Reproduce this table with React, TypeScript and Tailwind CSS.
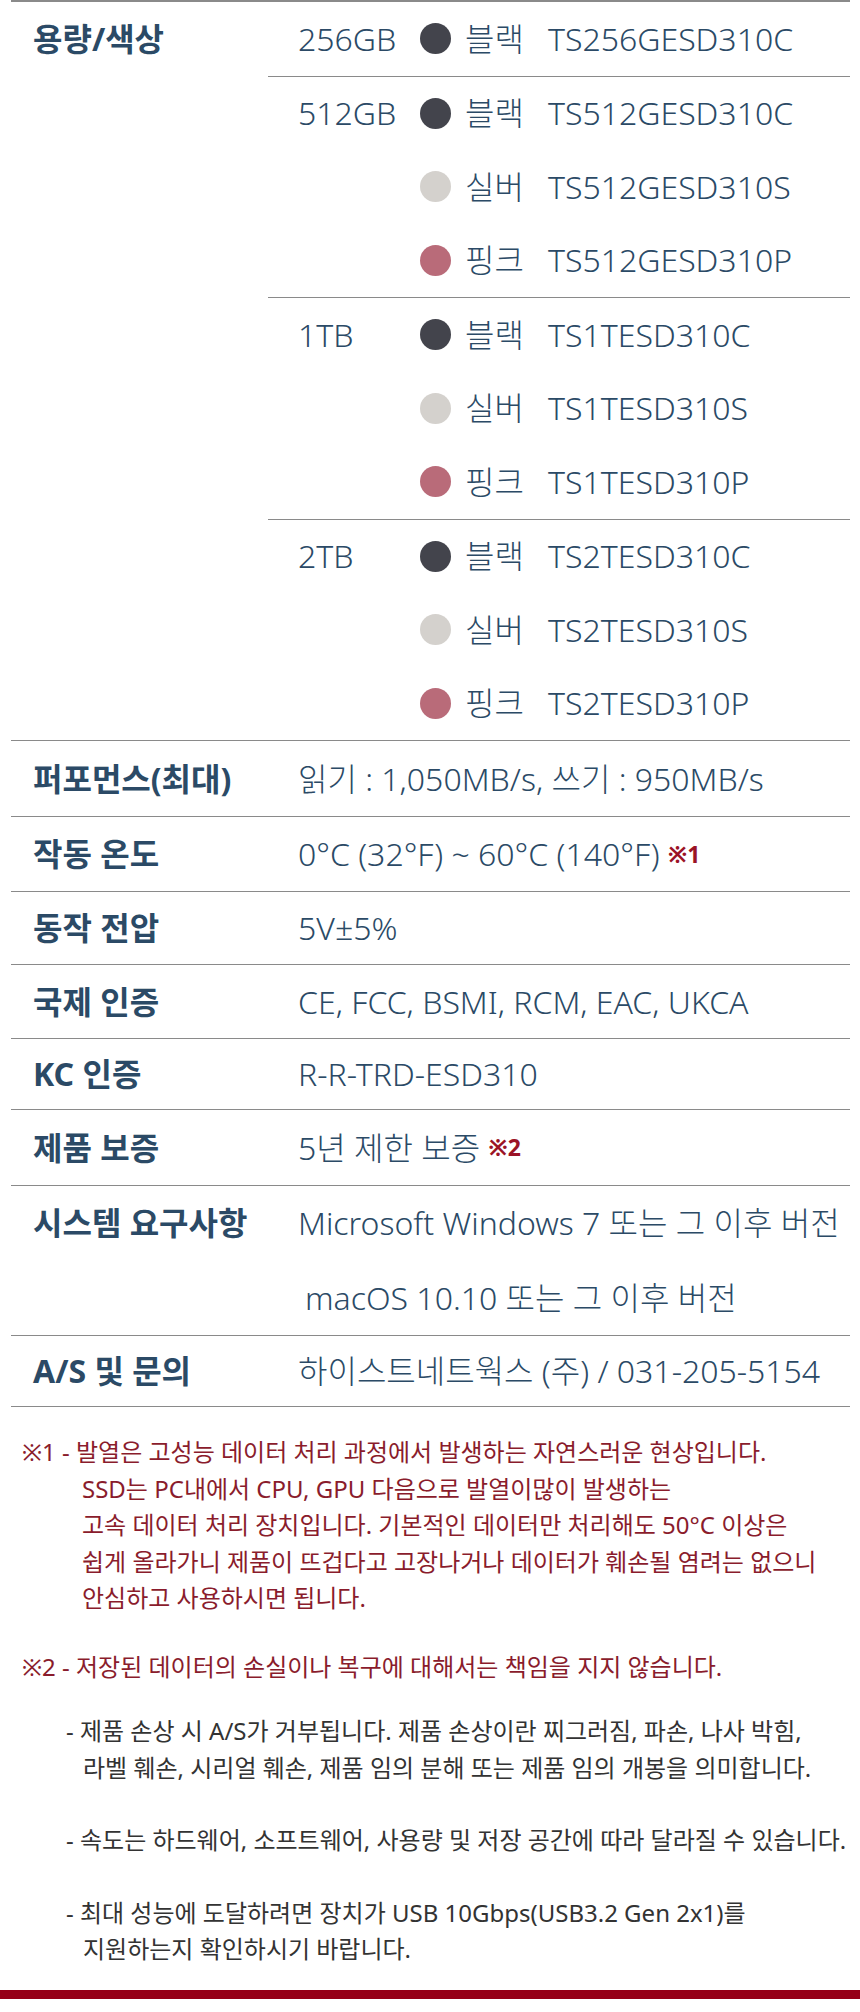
const FONT = { fontFamily: '"Noto Sans", "Noto Sans CJK KR", sans-serif' };

type Sub = { color: string; name: string; model: string };
type Group = { cap: string; items: Sub[] };

const DOT: Record<string, string> = {
  black: "bg-[#43444c]",
  silver: "bg-[#d4d1cd]",
  pink: "bg-[#b96b79]",
};

const groups: Group[] = [
  { cap: "256GB", items: [{ color: "black", name: "블랙", model: "TS256GESD310C" }] },
  {
    cap: "512GB",
    items: [
      { color: "black", name: "블랙", model: "TS512GESD310C" },
      { color: "silver", name: "실버", model: "TS512GESD310S" },
      { color: "pink", name: "핑크", model: "TS512GESD310P" },
    ],
  },
  {
    cap: "1TB",
    items: [
      { color: "black", name: "블랙", model: "TS1TESD310C" },
      { color: "silver", name: "실버", model: "TS1TESD310S" },
      { color: "pink", name: "핑크", model: "TS1TESD310P" },
    ],
  },
  {
    cap: "2TB",
    items: [
      { color: "black", name: "블랙", model: "TS2TESD310C" },
      { color: "silver", name: "실버", model: "TS2TESD310S" },
      { color: "pink", name: "핑크", model: "TS2TESD310P" },
    ],
  },
];

const LABEL = "w-[257px] shrink-0 pl-[22px] flex items-center text-[32px] font-bold text-[#2b4a66]";
const VALUE = "text-[32px] font-light text-[#2b4a66] whitespace-nowrap";

function Mark({ n }: { n: string }) {
  return <span className="ml-[8px] text-[23px] font-bold text-[#9b1326]">※{n}</span>;
}

function SpecRow({ label, h, children }: { label: string; h: string; children: React.ReactNode }) {
  return (
    <div className={`flex border-b border-[#8a8a8a] ${h}`}>
      <div className={LABEL}>{label}</div>
      <div className={`flex-1 pl-[30px] flex items-center ${VALUE}`}>{children}</div>
    </div>
  );
}

export default function App() {
  return (
    <div className="w-[860px] bg-white" style={FONT}>
      <div className="pl-[11px] pr-[10px]">
        {/* 용량/색상 */}
        <div className="flex border-t-2 border-b border-[#8a8a8a]">
          <div className={`${LABEL} h-[73.5px]`}>용량/색상</div>
          <div className="flex-1">
            {groups.map((g, gi) => (
              <div key={g.cap} className={`flex ${gi > 0 ? "border-t border-[#8a8a8a]" : ""}`}>
                <div className={`w-[152px] shrink-0 pl-[30px] h-[73.5px] flex items-center ${VALUE}`}>
                  {g.cap}
                </div>
                <div className="flex-1">
                  {g.items.map((it) => (
                    <div key={it.model} className={`h-[73.5px] flex items-center ${VALUE}`}>
                      <span className={`w-[31px] h-[31px] rounded-full shrink-0 ${DOT[it.color]}`} />
                      <span className="ml-[14px] w-[83px] shrink-0">{it.name}</span>
                      <span>{it.model}</span>
                    </div>
                  ))}
                </div>
              </div>
            ))}
          </div>
        </div>

        <SpecRow label="퍼포먼스(최대)" h="h-[76px]">
          읽기 : 1,050MB/s, 쓰기 : 950MB/s
        </SpecRow>
        <SpecRow label="작동 온도" h="h-[75px]">
          0°C (32°F) ~ 60°C (140°F)
          <Mark n="1" />
        </SpecRow>
        <SpecRow label="동작 전압" h="h-[73px]">
          5V±5%
        </SpecRow>
        <SpecRow label="국제 인증" h="h-[74px]">
          CE, FCC, BSMI, RCM, EAC, UKCA
        </SpecRow>
        <SpecRow label="KC 인증" h="h-[71px]">
          R-R-TRD-ESD310
        </SpecRow>
        <SpecRow label="제품 보증" h="h-[76px]">
          5년 제한 보증
          <Mark n="2" />
        </SpecRow>

        {/* 시스템 요구사항 */}
        <div className="flex border-b border-[#8a8a8a] h-[150px]">
          <div className={`${LABEL} h-[74px]`}>시스템 요구사항</div>
          <div className={`flex-1 pl-[30px] ${VALUE}`}>
            <div className="h-[74px] flex items-center">Microsoft Windows 7 또는 그 이후 버전</div>
            <div className="h-[75px] flex items-center pl-[7px]">macOS 10.10 또는 그 이후 버전</div>
          </div>
        </div>

        <SpecRow label="A/S 및 문의" h="h-[71px]">
          하이스트네트웍스 (주) / 031-205-5154
        </SpecRow>
      </div>

      {/* notes */}
      <div className="mt-[27px] pl-[22px] text-[24px] leading-[36.5px] whitespace-nowrap">
        <div className="text-[#8a1c2c]">
          <p>※1 - 발열은 고성능 데이터 처리 과정에서 발생하는 자연스러운 현상입니다.</p>
          <div className="pl-[60px]">
            <p>SSD는 PC내에서 CPU, GPU 다음으로 발열이많이 발생하는</p>
            <p>고속 데이터 처리 장치입니다. 기본적인 데이터만 처리해도 50°C 이상은</p>
            <p>쉽게 올라가니 제품이 뜨겁다고 고장나거나 데이터가 훼손될 염려는 없으니</p>
            <p>안심하고 사용하시면 됩니다.</p>
          </div>
        </div>

        <p className="mt-[32px] text-[#8a1c2c]">※2 - 저장된 데이터의 손실이나 복구에 대해서는 책임을 지지 않습니다.</p>

        <div className="pl-[44px] text-[#333333]">
          <div className="mt-[28px]">
            <p>- 제품 손상 시 A/S가 거부됩니다. 제품 손상이란 찌그러짐, 파손, 나사 박힘,</p>
            <p className="pl-[17px]">라벨 훼손, 시리얼 훼손, 제품 임의 분해 또는 제품 임의 개봉을 의미합니다.</p>
          </div>
          <p className="mt-[36px]">- 속도는 하드웨어, 소프트웨어, 사용량 및 저장 공간에 따라 달라질 수 있습니다.</p>
          <div className="mt-[36px]">
            <p>- 최대 성능에 도달하려면 장치가 USB 10Gbps(USB3.2 Gen 2x1)를</p>
            <p className="pl-[17px]">지원하는지 확인하시기 바랍니다.</p>
          </div>
        </div>
      </div>

      <div className="mt-[22px] h-[9px] bg-[#960018]" />
      <div className="h-[13px]" />
    </div>
  );
}
